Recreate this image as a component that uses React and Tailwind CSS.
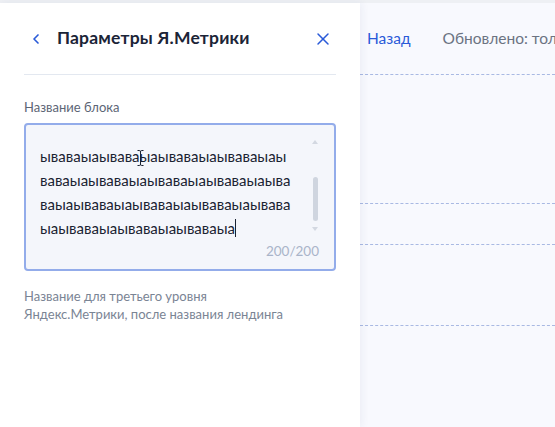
import { ChevronLeft, X } from "lucide-react";

const lines = [
  "ываваыаываваыаываваыаываваыаы",
  "ваваыаываваыаываваыаываваыаыва",
  "ваыаываваыаываваыаываваыаывава",
  "ыаываваыаываваыаываваыа",
];

function App() {
  return (
    <div
      className="w-[555px] h-[427px] overflow-hidden flex flex-col bg-[#f8f9fe]"
      style={{ fontFamily: "Lato, 'Noto Sans', sans-serif" }}
    >
      <div className="h-[3px] bg-[#eef0f4] shrink-0" />
      <div className="flex flex-1 min-h-0">
        {/* панель параметров */}
        <div className="w-[360px] shrink-0 bg-white shadow-[2px_0_8px_rgba(30,50,100,0.06)] relative z-10 flex flex-col">
          <div className="mx-6 h-[72px] flex items-center border-b border-[#e3e8f0]">
            <ChevronLeft size={16} strokeWidth={2.5} className="text-[#2a5ad8] ml-[4px]" />
            <h2 className="ml-[13px] text-[17.5px] font-bold text-[#1b2437] tracking-[0.2px]">
              Параметры Я.Метрики
            </h2>
            <X size={20} strokeWidth={1.8} className="text-[#2a5ad8] ml-auto mr-[3px]" />
          </div>

          <div className="px-6 pt-[23px]">
            <p className="text-[13px] leading-[18px] text-[#5c6575]">Название блока</p>
            <div className="mt-[7px] h-[148px] rounded-[4px] border-2 border-[#93acea] bg-[#f4f6fb] relative">
              <div className="pl-[14px] pt-[19px] pr-[24px] text-[15px] leading-[24px] text-[#1a2332]">
                {lines.map((l, i) => (
                  <div key={i} className="whitespace-nowrap">
                    {l}
                    {i === lines.length - 1 && (
                      <span className="inline-block w-[1px] h-[18px] bg-[#1a2332] align-[-3px]" />
                    )}
                  </div>
                ))}
              </div>
              {/* скроллбар */}
              <div className="absolute right-[16px] top-[15px] w-[6px] flex flex-col items-center">
                <svg width="6" height="4" viewBox="0 0 6 4">
                  <path d="M0 4 L3 0 L6 4Z" fill="#d3d8e1" />
                </svg>
                <div className="mt-[33px] w-[5px] h-[44px] rounded-full bg-[#cfd5df]" />
                <svg width="6" height="4" viewBox="0 0 6 4" className="mt-[6px]">
                  <path d="M0 0 L3 4 L6 0Z" fill="#d3d8e1" />
                </svg>
              </div>
              <span className="absolute right-[15px] bottom-[8px] text-[13.5px] text-[#a9b4c9]">200/200</span>
              {/* курсор мыши */}
              <svg width="7" height="16" viewBox="0 0 7 16" className="absolute left-[111px] top-[25px]">
                <path d="M0.5 0.5 H2.5 Q3.5 0.5 3.5 2 V14 Q3.5 15.5 2.5 15.5 H0.5 M6.5 0.5 H4.5 Q3.5 0.5 3.5 2 M3.5 14 Q3.5 15.5 4.5 15.5 H6.5" fill="none" stroke="#1a2332" strokeWidth="1" />
              </svg>
            </div>
            <p className="mt-[16px] text-[13px] leading-[18px] text-[#7a8494]">
              Название для третьего уровня
              <br />
              Яндекс.Метрики, после названия лендинга
            </p>
          </div>
        </div>

        {/* правая область */}
        <div className="flex-1 min-w-0 flex flex-col overflow-hidden">
          <div className="h-[72px] flex items-center pl-[7px] gap-[32px] whitespace-nowrap border-b border-dashed border-[#a9b9e3] text-[15.5px]">
            <span className="text-[#2a5ad8]">Назад</span>
            <span className="text-[#6b7382]">Обновлено: только что</span>
          </div>
          <div className="h-[129px] border-b border-dashed border-[#a9b9e3]" />
          <div className="h-[41px] border-b border-dashed border-[#a9b9e3]" />
          <div className="h-[81px] border-b border-dashed border-[#a9b9e3]" />
        </div>
      </div>
    </div>
  );
}

export default App;
